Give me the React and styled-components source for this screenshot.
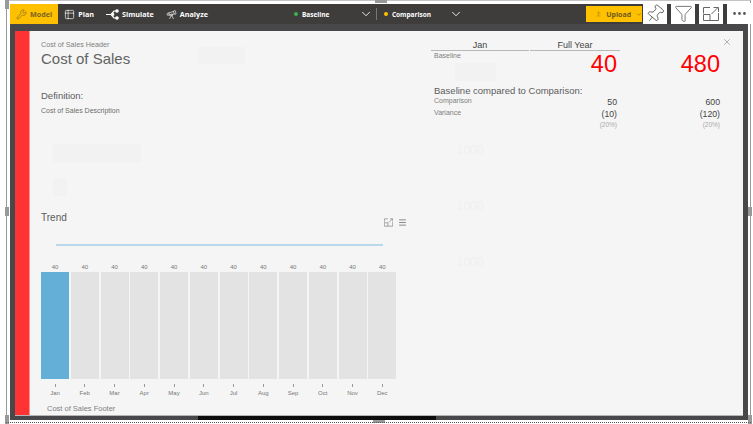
import styled, { createGlobalStyle } from "styled-components";
import { Wrench, Table2, Telescope, ChevronDown, ArrowUpFromLine, Pin, Funnel, X, Menu, Ellipsis } from "lucide-react";

const months = ["Jan", "Feb", "Mar", "Apr", "May", "Jun", "Jul", "Aug", "Sep", "Oct", "Nov", "Dec"];

const ghostBoxes = [
    { x: 168, y: 16, w: 47, h: 17 },
    { x: 425, y: 32, w: 41, h: 18 },
    { x: 23, y: 113, w: 88, h: 18 },
    { x: 23, y: 147, w: 14, h: 18 },
];

const ghostLabels = [
    { x: 427, y: 112, text: "1000" },
    { x: 427, y: 168, text: "1000" },
    { x: 427, y: 224, text: "1000" },
];

const GlobalStyle = createGlobalStyle`
    * {
        box-sizing: border-box;
    }

    html, body {
        margin: 0;
        width: 753px;
        height: 424px;
        overflow: hidden;
        background: #ffffff;
        font-family: "Liberation Sans", Arial, sans-serif;
    }
`;

function SimulateIcon() {
    return (
        <svg width="13" height="11" viewBox="0 0 13 11" fill="none" stroke="#ffffff" strokeWidth="1.2">
            <path d="M0 5.5h5M5 5.5L8 2h2M5 5.5L8 9h2" />
            <circle cx="11" cy="2" r="1.2" fill="#ffffff" />
            <circle cx="11" cy="9" r="1.2" fill="#ffffff" />
            <circle cx="7" cy="5.5" r="0.8" fill="#ffffff" />
        </svg>
    );
}

function FocusIcon({ width, height }) {
    return (
        <svg width={width} height={height} viewBox="0 0 16 14" fill="none" stroke="#666666" strokeWidth="1">
            <path d="M7 .5H.5v6M.5 7.500h6.500v6M.5 7.500v6h15V6" />
            <path d="M8.500 7l6.500-6.500M10.500.5H15.500V5" />
        </svg>
    );
}

export default function App() {
    return (
        <Page>
            <GlobalStyle />
            <OuterFrame>
                <Frame>
                    <Toolbar>
                        <NavButton $active><Wrench size={11} strokeWidth={1.4} />Model</NavButton>
                        <NavButton><Table2 size={11} strokeWidth={1.4} />Plan</NavButton>
                        <NavButton><SimulateIcon />Simulate</NavButton>
                        <NavButton><Telescope size={11} strokeWidth={1.4} />Analyze</NavButton>
                        <Scenario $offset={80} $color="#3cb44b">
                            <i />
                            <span>Baseline</span>
                            <ChevronDown size={14} color="#ffffff" strokeWidth={1.5} />
                        </Scenario>
                        <Divider />
                        <Scenario $offset={0} $color="#ffc000">
                            <i />
                            <span>Comparison</span>
                            <ChevronDown size={14} color="#ffffff" strokeWidth={1.5} />
                        </Scenario>
                        <UploadButton><ArrowUpFromLine size={8} strokeWidth={1.6} />Upload<ChevronDown size={9} /></UploadButton>
                    </Toolbar>
                    <Modal>
                        <Stripe />
                        <ModalBody>
                            {ghostBoxes.map((box) => (
                                <GhostBox key={box.x} style={{ left: box.x, top: box.y, width: box.w, height: box.h }} />
                            ))}
                            {ghostLabels.map((label) => (
                                <GhostLabel key={label.y} style={{ left: label.x, top: label.y }}>{label.text}</GhostLabel>
                            ))}
                            <CloseButton><X size={10} strokeWidth={1.5} /></CloseButton>
                            <TopRow>
                                <Intro>
                                    <HeaderLabel>Cost of Sales Header</HeaderLabel>
                                    <Title>Cost of Sales</Title>
                                    <DefinitionLabel>Definition:</DefinitionLabel>
                                    <Description>Cost of Sales Description</Description>
                                </Intro>
                                <Figures>
                                    <HeadRow>
                                        <span>Jan</span>
                                        <span>Full Year</span>
                                    </HeadRow>
                                    <SmallLabel>Baseline</SmallLabel>
                                    <BigRow>
                                        <span />
                                        <span>40</span>
                                        <span>480</span>
                                    </BigRow>
                                    <CompareTitle>Baseline compared to Comparison:</CompareTitle>
                                    <ValueRow>
                                        <SmallLabel>Comparison</SmallLabel>
                                        <span>50</span>
                                        <span>600</span>
                                    </ValueRow>
                                    <ValueRow>
                                        <SmallLabel>Variance</SmallLabel>
                                        <span>(10)</span>
                                        <span>(120)</span>
                                    </ValueRow>
                                    <PercentRow>
                                        <span />
                                        <span>(20%)</span>
                                        <span>(20%)</span>
                                    </PercentRow>
                                </Figures>
                            </TopRow>
                            <TrendHead>
                                <span>Trend</span>
                                <ChartTools>
                                    <FocusIcon width={9} height={9} />
                                    <Menu size={9} color="#666666" />
                                </ChartTools>
                            </TrendHead>
                            <TrendLine />
                            <Chart>
                                {months.map((month, index) => (
                                    <Column key={month}>
                                        <BarValue>40</BarValue>
                                        <Bar $active={index === 0} />
                                        <Tick />
                                        <Month>{month}</Month>
                                    </Column>
                                ))}
                            </Chart>
                            <Footer>Cost of Sales Footer</Footer>
                        </ModalBody>
                    </Modal>
                    <BottomBar />
                </Frame>
            </OuterFrame>
            <HeaderIcons>
                <IconButton><Pin size={20} strokeWidth={1} color="#555555" style={{ transform: "rotate(40deg)" }} /></IconButton>
                <IconButton><Funnel size={19} strokeWidth={1} color="#555555" /></IconButton>
                <IconButton><FocusIcon width={16} height={14} /></IconButton>
                <IconButton><Ellipsis size={17} strokeWidth={2} color="#555555" /></IconButton>
            </HeaderIcons>
            <Handle $x={5} $y={0} />
            <Handle $x={5} $y={207} />
            <Handle $x={5} $y={415} />
            <Handle $x={375} $y={0} $wide />
            <Handle $x={373} $y={420} $wide />
            <Handle $x={748} $y={207} />
            <Handle $x={748} $y={415} />
            <DashedEdge />
        </Page>
    );
}

const Page = styled.div`
    position: relative;
    width: 753px;
    height: 424px;
    padding: 0 2px 3px 6px;
    background: #ffffff;
    overflow: hidden;
`;

const OuterFrame = styled.div`
    width: 100%;
    height: 100%;
    padding: 3px 2px 1px 3px;
    border-left: 1px solid #9a9a9a;
    border-right: 1px solid #9a9a9a;
    border-top: 1px solid #c4c4c4;
`;

const Frame = styled.div`
    display: flex;
    flex-direction: column;
    width: 100%;
    height: 100%;
    background: #48484a;
`;

const Toolbar = styled.div`
    display: flex;
    align-items: center;
    flex: 0 0 20px;
    background: #3e3d3b;
    color: #ffffff;
    font-family: "Open Sans", sans-serif;
    font-size: 7.200px;
    font-weight: 700;
`;

const NavButton = styled.div`
    display: flex;
    align-items: center;
    gap: 3px;
    height: 100%;
    padding: 0 6px;
    background: ${(props) => (props.$active ? "#ffc000" : "transparent")};
    color: ${(props) => (props.$active ? "#7a6420" : "#ffffff")};
`;

const Scenario = styled.div`
    display: flex;
    align-items: center;
    width: 79px;
    margin-left: ${(props) => props.$offset}px;
    font-size: 6.500px;

    i {
        width: 4px;
        height: 4px;
        margin-right: 4px;
        border-radius: 50%;
        background: ${(props) => props.$color};
    }

    svg {
        margin-left: auto;
    }
`;

const Divider = styled.div`
    width: 1px;
    height: 12px;
    margin: 0 7px 0 3px;
    background: #77777a;
`;

const UploadButton = styled.div`
    display: flex;
    align-items: center;
    gap: 5px;
    width: 56px;
    height: 16px;
    margin-left: auto;
    margin-right: 106px;
    padding-left: 10px;
    background: #ffc000;
    color: #6d5a1c;
    font-size: 7px;
`;

const Modal = styled.div`
    display: flex;
    flex: 0 0 385px;
    margin: 7px 5px 0 5px;
    background: #f5f5f5;
    border-bottom: 1px solid #b5b5b5;
`;

const Stripe = styled.div`
    flex: 0 0 15px;
    background: #ff3333;
    border-right: 1px solid #ff9090;
`;

const ModalBody = styled.div`
    position: relative;
    flex: 1;
    padding: 9px 0 0 11px;
    color: #5c5c5c;
`;

const GhostBox = styled.div`
    position: absolute;
    background: #f2f2f2;
`;

const GhostLabel = styled.div`
    position: absolute;
    color: #f0f0f0;
    font-size: 12px;
`;

const CloseButton = styled.div`
    position: absolute;
    top: 6px;
    right: 11px;
    display: flex;
    color: #888888;
`;

const TopRow = styled.div`
    position: relative;
    display: flex;
    height: 172px;
`;

const Intro = styled.div`
    width: 390px;
`;

const HeaderLabel = styled.div`
    font-size: 7.200px;
    line-height: 9px;
    color: #808080;
`;

const Title = styled.div`
    margin-top: 1px;
    font-size: 15px;
    line-height: 18px;
    color: #636363;
`;

const DefinitionLabel = styled.div`
    margin-top: 22px;
    font-size: 9.500px;
    line-height: 12px;
`;

const Description = styled.div`
    margin-top: 4px;
    font-size: 7px;
    line-height: 9px;
    color: #6c6c6c;
`;

const Figures = styled.div`
    width: 290px;
    padding-top: 1px;
`;

const HeadRow = styled.div`
    display: grid;
    grid-template-columns: 98px 90px;
    gap: 1px;
    color: #444444;
    font-size: 9px;
    line-height: 9px;

    span {
        border-bottom: 1px solid #b8b8b8;
        text-align: center;
    }
`;

const SmallLabel = styled.div`
    padding-left: 3px;
    font-size: 7px;
    line-height: 9px;
    color: #808080;
`;

const BigRow = styled.div`
    display: grid;
    grid-template-columns: 100px 86px 103px;
    margin-top: -8px;
    color: #ff0000;
    font-size: 23.500px;
    line-height: 25px;
    text-align: right;
`;

const CompareTitle = styled.div`
    margin-top: 8px;
    padding-left: 3px;
    font-size: 9.500px;
    line-height: 11px;
`;

const ValueRow = styled.div`
    display: grid;
    grid-template-columns: 100px 86px 103px;
    color: #444444;
    font-size: 8.700px;
    line-height: 12px;
    text-align: right;

    > div {
        text-align: left;
    }
`;

const PercentRow = styled(ValueRow)`
    color: #aaaaaa;
    font-size: 6.500px;
    line-height: 9px;
`;

const TrendHead = styled.div`
    position: relative;
    display: flex;
    align-items: flex-start;
    justify-content: space-between;
    width: 366px;
    height: 12px;
    font-size: 10px;
    line-height: 12px;
`;

const ChartTools = styled.div`
    display: flex;
    gap: 5px;
    height: 9px;
    margin-top: 6px;
`;

const TrendLine = styled.div`
    position: relative;
    width: 327px;
    height: 2px;
    margin: 20px 0 0 15px;
    background: #b9d9ea;
`;

const Chart = styled.div`
    position: relative;
    display: grid;
    grid-template-columns: repeat(12, 28px);
    column-gap: 1.750px;
    margin-top: 17px;
`;

const Column = styled.div`
    display: flex;
    flex-direction: column;
    align-items: center;
`;

const BarValue = styled.div`
    font-size: 6px;
    line-height: 8px;
    color: #777777;
`;

const Bar = styled.div`
    width: 100%;
    height: 107px;
    margin-top: 1px;
    background: ${(props) => (props.$active ? "#63afd8" : "#e3e3e3")};
`;

const Tick = styled.div`
    width: 1px;
    height: 3px;
    margin-top: 5px;
    background: #999999;
`;

const Month = styled.div`
    margin-top: 3px;
    font-size: 6px;
    line-height: 7px;
    color: #777777;
`;

const Footer = styled.div`
    position: relative;
    margin: 7px 0 0 6px;
    font-size: 7.500px;
    line-height: 9px;
    color: #808080;
`;

const BottomBar = styled.div`
    width: 238px;
    height: 5px;
    margin-left: 188px;
    background: #0c0c0c;
`;

const HeaderIcons = styled.div`
    position: absolute;
    top: 3px;
    right: 2px;
    display: flex;
    gap: 4px;
`;

const IconButton = styled.div`
    display: flex;
    align-items: center;
    justify-content: center;
    width: 24px;
    height: 21px;
    background: #ffffff;
`;

const Handle = styled.div`
    position: absolute;
    left: ${(props) => props.$x}px;
    top: ${(props) => props.$y}px;
    width: ${(props) => (props.$wide ? 12 : 4)}px;
    height: ${(props) => (props.$wide ? 3 : 9)}px;
    background: #999999;
`;

const DashedEdge = styled.div`
    position: absolute;
    left: 6px;
    right: 2px;
    bottom: 1px;
    border-bottom: 1px dotted #555555;
`;
